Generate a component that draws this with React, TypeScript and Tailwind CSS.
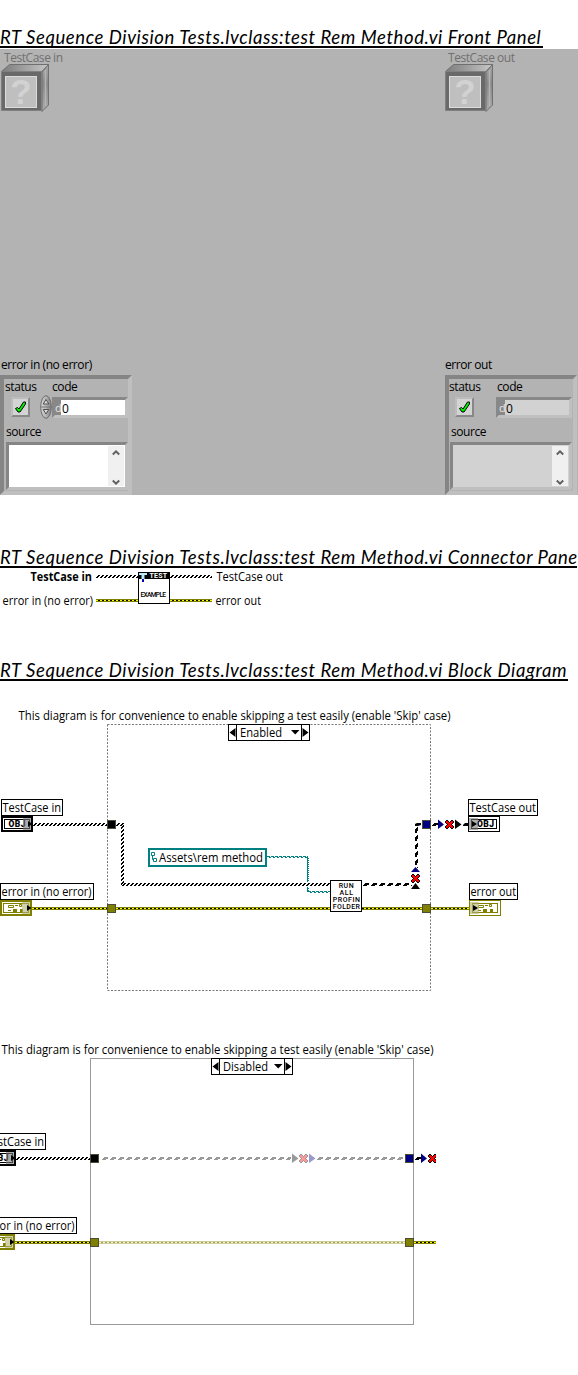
import type { ReactNode } from "react";

const UI = "'Open Sans', 'Noto Sans', sans-serif";

function Heading({ children, className }: { children: ReactNode; className: string }) {
  return (
    <h2
      className={
        "h-6 overflow-hidden whitespace-nowrap border-b-2 border-black font-[Lato,sans-serif] text-[18.5px] italic leading-[26px] tracking-[0.58px] text-black " +
        className
      }
    >
      {children}
    </h2>
  );
}

/* ---------- Front panel ---------- */

function ObjectCube() {
  return (
    <svg width="49" height="49" viewBox="0 0 49 49" className="block">
      <defs>
        <linearGradient id="cubeTop" x1="0" y1="0" x2="1" y2="0">
          <stop offset="0" stopColor="#7c7c7c" />
          <stop offset="1" stopColor="#c6c6c6" />
        </linearGradient>
        <linearGradient id="cubeSide" x1="0" y1="0" x2="0" y2="1">
          <stop offset="0" stopColor="#a8a8a8" />
          <stop offset="0.4" stopColor="#888" />
          <stop offset="1" stopColor="#aaa" />
        </linearGradient>
      </defs>
      <path d="M1.5 7.5L9.5 0.5H48.5L42 7.5Z" fill="url(#cubeTop)" stroke="#707070" />
      <path d="M42 8L48.5 0.5V41L42 47.5Z" fill="url(#cubeSide)" stroke="#707070" />
      <path d="M45.5 6V42" stroke="#b4b4b4" strokeWidth="1.5" />
      <rect x="1.5" y="7.5" width="40" height="39" fill="#696969" stroke="#808080" />
      <rect x="5.5" y="12.5" width="31" height="31" fill="#bfbfbf" stroke="#dcdcdc" />
      <text x="21" y="40" textAnchor="middle" fontFamily="Liberation Sans, sans-serif" fontWeight="700" fontSize="35" fill="#d2d2d2">
        ?
      </text>
    </svg>
  );
}

function ObjectControl({ label }: { label: string }) {
  return (
    <div className="w-[133px]">
      <div className="h-[15px] whitespace-nowrap pl-1 font-['Open_Sans',sans-serif] text-[12px] leading-[18px] tracking-[-0.45px] text-[#707070]">
        {label}
      </div>
      <ObjectCube />
    </div>
  );
}

function StatusLight() {
  return (
    <div className="h-5 w-[19px] border-2 border-b-[#888] border-l-[#bdbdbd] border-r-[#888] border-t-[#bdbdbd] bg-[#d4d4d4]">
      <svg width="15" height="16" viewBox="0 0 15 16" className="block">
        <path d="M2.5 9.5L4.5 8.5L6 10L10.5 3H12.5V5L7 13H5Z" fill="#00f000" stroke="#000" strokeLinejoin="round" />
      </svg>
    </div>
  );
}

function Spinner() {
  return (
    <svg width="12" height="24" viewBox="0 0 12 24" className="block">
      <defs>
        <linearGradient id="knob" x1="0" y1="0" x2="1" y2="0">
          <stop offset="0" stopColor="#d8d8d8" />
          <stop offset="0.5" stopColor="#b4b4b4" />
          <stop offset="1" stopColor="#808080" />
        </linearGradient>
      </defs>
      <ellipse cx="6" cy="12" rx="5.3" ry="11.3" fill="url(#knob)" stroke="#6e6e6e" />
      <path d="M1 12H11" stroke="#777" />
      <path d="M3.2 9L6 4.5L8.8 9Z" fill="#d8d8d8" stroke="#444" strokeWidth=".9" />
      <path d="M3.2 14.5L6 19L8.8 14.5Z" fill="#d8d8d8" stroke="#444" strokeWidth=".9" />
    </svg>
  );
}

function ErrorCluster({ title, input }: { title: string; input: boolean }) {
  const fieldBg = input ? "bg-white" : "bg-[#d2d2d2]";
  return (
    <div className="w-[133px] font-['Open_Sans',sans-serif] text-[12px] tracking-[-0.42px] text-black">
      <div className="h-[18px] whitespace-nowrap pl-px leading-[16px]">{title}</div>
      <div
        className={
          "h-[120px] border-4 border-b-[#bfbfbf] border-l-[#858585] border-r-[#bfbfbf] border-t-[#858585] bg-[#b3b3b3] " +
          (input ? "w-[132px]" : "ml-px w-[132px]")
        }
      >
        <div className={"flex h-[18px] leading-[16px] " + (input ? "pl-px" : "")}>
          <span className={input ? "w-[47px]" : "w-12"}>status</span>
          <span>code</span>
        </div>
        <div className={"flex h-[22px] items-start " + (input ? "pl-px" : "")}>
          <div className="ml-[6px] h-5 w-[19px]">
            <StatusLight />
          </div>
          <div className="-mt-0.5 ml-[10px] h-6 w-3">{input && <Spinner />}</div>
          <div
            className={
              "flex h-[21px] w-[76px] border-[3px] border-b-[#c0c0c0] border-l-[#888] border-r-[#c0c0c0] border-t-[#888] leading-[17px] " +
              fieldBg
            }
          >
            <span className="w-[6px] bg-[#888] text-[11px] leading-[16px] text-[#e4e4e4]">d</span>
            <span className="pl-px">0</span>
          </div>
        </div>
        <div className="h-[23px] pl-0.5 pt-[3px] leading-[20px]">source</div>
        <div
          className={
            "flex h-[48px] w-[122px] justify-end border-[3px] border-b-[#bfbfbf] border-l-[#858585] border-r-[#bfbfbf] border-t-[#858585] " +
            (input ? "ml-0.5 " : "ml-px ") +
            fieldBg
          }
        >
          <div className="my-px mr-px flex w-4 flex-col items-center justify-between bg-[#f0f0f0] pb-0 pt-[3px]">
            <svg width="8" height="7" viewBox="0 0 8 7">
              <path d="M0.8 5.5L4 2.3L7.2 5.5" stroke="#606060" strokeWidth="2" fill="none" />
            </svg>
            <svg width="8" height="7" viewBox="0 0 8 7">
              <path d="M0.8 1.5L4 4.7L7.2 1.5" stroke="#606060" strokeWidth="2" fill="none" />
            </svg>
          </div>
        </div>
      </div>
    </div>
  );
}

function FrontPanel() {
  return (
    <div className="mt-px flex h-[446px] flex-col justify-between overflow-hidden bg-[#b3b3b3]">
      <div className="flex justify-between">
        <ObjectControl label="TestCase in" />
        <div className="w-[134px]">
          <ObjectControl label="TestCase out" />
        </div>
      </div>
      <div className="flex justify-between">
        <ErrorCluster title="error in (no error)" input />
        <div className="w-[134px]">
          <ErrorCluster title="error out" input={false} />
        </div>
      </div>
    </div>
  );
}

/* ---------- Wires and terminals ---------- */

function Label({ x, y, w, children, bold }: { x: number; y: number; w: number; children: string; bold?: boolean }) {
  return (
    <text x={x} y={y} textLength={w} lengthAdjust="spacingAndGlyphs" fontFamily={UI} fontSize="12" fontWeight={bold ? 700 : 400} fill="#000">
      {children}
    </text>
  );
}

function Tiny({
  x,
  y,
  w,
  children,
  fill = "#000",
  size = 7,
  weight = 500,
}: {
  x: number;
  y: number;
  w: number;
  children: string;
  fill?: string;
  size?: number;
  weight?: number;
}) {
  return (
    <text x={x} y={y} textLength={w} lengthAdjust="spacing" fontFamily="Roboto, sans-serif" fontSize={size} fontWeight={weight} fill={fill}>
      {children}
    </text>
  );
}

function Patterns() {
  return (
    <svg width="0" height="0" className="absolute">
      <defs>
        <pattern id="objH" width="4" height="3" y="1" patternUnits="userSpaceOnUse">
          <path d="M2 0H4V1H2ZM1 1H3V2H1ZM0 2H2V3H0Z" fill="#000" />
        </pattern>
        <pattern id="objV" width="3" height="4" x="1" patternUnits="userSpaceOnUse">
          <path d="M0 2H1V4H0ZM1 1H2V3H1ZM2 0H3V2H2Z" fill="#000" />
        </pattern>
        <pattern id="dynH" width="8" height="3" y="1" patternUnits="userSpaceOnUse">
          <path d="M3 0H7V1H3ZM2 1H7V2H2ZM1 2H5V3H1Z" fill="#000" />
        </pattern>
        <pattern id="dynV" width="3" height="8" x="1" patternUnits="userSpaceOnUse">
          <path d="M0 3H1V7H0ZM1 2H2V7H1ZM2 1H3V5H2Z" fill="#000" />
        </pattern>
        <pattern id="err" width="4" height="3" y="1" patternUnits="userSpaceOnUse">
          <rect width="4" height="3" fill="#808000" />
          <rect y="1" width="2" height="1" fill="#ff0" />
          <rect x="2" y="1" width="2" height="1" fill="#000" />
        </pattern>
        <pattern id="pathH" width="4" height="2" patternUnits="userSpaceOnUse">
          <path d="M0 0H3V1H0ZM2 1H4V2H2Z" fill="#008080" />
        </pattern>
        <pattern id="pathV" width="2" height="2" x="1" patternUnits="userSpaceOnUse">
          <path d="M0 0H1V2H0ZM1 1H2V2H1Z" fill="#008080" />
        </pattern>
      </defs>
    </svg>
  );
}

type WireKind = "obj" | "dyn" | "err";

/* Horizontal wire, three pixels thick, drawn from x1 to x2 with its top edge at y. */
function WireH({ kind, x1, x2, y }: { kind: WireKind; x1: number; x2: number; y: number }) {
  const id = kind === "err" ? "err" : kind + "H";
  return (
    <g transform={`translate(${x1} ${y - 1})`}>
      <rect x="0" y="1" width={x2 - x1} height="3" fill={`url(#${id})`} />
    </g>
  );
}

function WireV({ kind, x, y1, y2 }: { kind: "obj" | "dyn"; x: number; y1: number; y2: number }) {
  return (
    <g transform={`translate(${x - 1} ${y1})`}>
      <rect x="1" y="0" width="3" height={y2 - y1} fill={`url(#${kind}V)`} />
    </g>
  );
}

function Tunnel({ x, y, fill }: { x: number; y: number; fill: string }) {
  return <rect x={x + 0.5} y={y + 0.5} width="8" height="8" fill={fill} stroke="#4c4c38" />;
}

/* Red cross on a broken wire, in a 9 by 9 box whose middle pixel is (x, y). */
function Broken({ x, y }: { x: number; y: number }) {
  return (
    <g transform={`translate(${x - 4} ${y - 4})`} shapeRendering="crispEdges">
      <path
        d="M1 0H3V1H4V2H5V1H6V0H8V1H9V3H8V4H7V5H8V6H9V8H8V9H6V8H5V7H4V8H3V9H1V8H0V6H1V5H2V4H1V3H0V1H1Z"
        fill="#000"
      />
      <path
        d="M1 1H3V2H4V3H5V2H6V1H8V3H7V4H6V5H7V6H8V8H6V7H5V6H4V7H3V8H1V6H2V5H3V4H2V3H1Z"
        fill="#f00"
      />
    </g>
  );
}

function BoxedLabel({ x, y, w, tx, tw, children }: { x: number; y: number; w: number; tx: number; tw: number; children: string }) {
  return (
    <g>
      <rect x={x + 0.5} y={y + 0.5} width={w - 1} height="16" fill="#fff" stroke="#000" />
      <Label x={tx} y={y + 13} w={tw}>
        {children}
      </Label>
    </g>
  );
}

function ClusterGlyph() {
  return (
    <g fill="none" stroke="#808000">
      <path d="M8.5 5.5H13.5V7.5H8.5ZM15 5.5H18M19.5 4.5H21.5V6.5H19.5ZM8 10.5H11" />
      <path d="M13 9H17V12H13ZM20 9H23V12H20Z" fill="#808000" stroke="none" />
    </g>
  );
}

function Terminal({ x, y, kind, output }: { x: number; y: number; kind: "obj" | "err"; output?: boolean }) {
  const c = kind === "obj" ? "#000" : "#808000";
  return (
    <g transform={`translate(${x} ${y})`}>
      {output ? (
        <rect x="0.5" y="0.5" width="31" height="15" fill="#fff" stroke={c} />
      ) : (
        <g>
          <rect x="0" y="0" width="32" height="16" fill={c} />
          <rect x="2" y="2" width="28" height="12" fill="#fff" />
        </g>
      )}
      <rect x="3.5" y="3.5" width="25" height="9" fill="#fff" stroke={c} />
      {kind === "obj" ? (
        <Tiny x={output ? 9 : 7.5} y={11} w={17} size={8.5} weight={900}>
          OBJ
        </Tiny>
      ) : output ? (
        <g transform="translate(1 0)">
          <ClusterGlyph />
        </g>
      ) : (
        <ClusterGlyph />
      )}
      {output ? (
        <g>
          <rect x="1" y="2" width="9" height="12" fill={kind === "obj" ? "#777" : "#b0b070"} opacity="0.6" />
          <path d="M4 5L9 8L4 11Z" fill="#000" />
        </g>
      ) : (
        <g>
          <rect x="22" y="2" width="8" height="12" fill={kind === "obj" ? "#777" : "#b0b070"} opacity="0.6" />
          <path d="M27 5L31.5 8L27 11Z" fill="#000" />
        </g>
      )}
    </g>
  );
}

function CaseSelector({ name, w }: { name: string; w: number }) {
  return (
    <g>
      <rect x="228.5" y="724.5" width="81" height="16" fill="#fff" stroke="#000" />
      <path d="M236.5 724V741M301.5 724V741" stroke="#000" />
      <path d="M235.5 728V737L229.5 732.5ZM302.5 728V737L308.5 732.5ZM291 730H299.5L295.2 734.5Z" fill="#000" />
      <Label x={240} y={737} w={w}>
        {name}
      </Label>
    </g>
  );
}

/* Parts shared by the enabled and the disabled case. */
function DiagramShell({ dotted, children }: { dotted: boolean; children: ReactNode }) {
  return (
    <g>
      <Label x={18.5} y={720} w={432}>
        This diagram is for convenience to enable skipping a test easily (enable 'Skip' case)
      </Label>
      <rect x="107.5" y="724.5" width="323" height="266" fill="none" stroke={dotted ? "#777" : "#999"} strokeDasharray={dotted ? "2 1.5" : undefined} />
      <CaseSelector name={dotted ? "Enabled" : "Disabled"} w={dotted ? 42 : 45} />
      <BoxedLabel x={1} y={799} w={62} tx={2.5} tw={58.5}>
        TestCase in
      </BoxedLabel>
      <Terminal x={1} y={816} kind="obj" />
      <BoxedLabel x={0} y={883} w={94} tx={1.5} tw={90}>
        error in (no error)
      </BoxedLabel>
      <Terminal x={0} y={900} kind="err" />
      <WireH kind="obj" x1={33} x2={107} y={823} />
      <WireH kind="err" x1={32} x2={107} y={907} />
      {children}
      <WireH kind="dyn" x1={431} x2={438} y={823} />
      <path d="M438 819.5L444 824.5L438 829Z" fill="#000080" />
      <Broken x={449} y={824} />
      <WireH kind="err" x1={431} x2={469} y={907} />
      <Tunnel x={107} y={820} fill="#000" />
      <Tunnel x={107} y={904} fill="#808000" />
      <Tunnel x={422} y={820} fill="#000080" />
      <Tunnel x={422} y={904} fill="#808000" />
    </g>
  );
}

function EnabledDiagram() {
  return (
    <svg width="578" height="319" viewBox="0 681 578 319" className="block">
      <DiagramShell dotted>
        <WireH kind="obj" x1={116} x2={124} y={823} />
        <WireV kind="obj" x={121} y1={825} y2={886} />
        <g transform="translate(267 856)">
          <rect width="41" height="2" fill="url(#pathH)" />
        </g>
        <g transform="translate(306 857)">
          <rect x="1" width="2" height="35" fill="url(#pathV)" />
        </g>
        <g transform="translate(308 891)">
          <rect width="22" height="2" fill="url(#pathH)" />
        </g>
        <rect x="304" y="882" width="8" height="5" fill="#fff" />
        <WireH kind="obj" x1={122} x2={330} y={883} />
        <WireH kind="err" x1={116} x2={422} y={907} />
        <rect x="149" y="849" width="117" height="17" fill="#fff" stroke="#008080" strokeWidth="2" />
        <path d="M151.5 852.5H154.5V855.5H151.5ZM152.5 856V859.5H153.5M153.5 858.5H156.5V861.5H153.5Z" fill="none" stroke="#008080" />
        <Label x={159} y={862} w={104}>
          Assets\rem method
        </Label>
        <rect x="330.5" y="880.5" width="31" height="31" fill="#fff" stroke="#000" />
        <Tiny x={338.7} y={888} w={15}>RUN</Tiny>
        <Tiny x={339.5} y={895} w={13.5}>ALL</Tiny>
        <Tiny x={332.7} y={902} w={27.3}>PROFIN</Tiny>
        <Tiny x={332.7} y={909} w={27.3}>FOLDER</Tiny>
        <WireH kind="dyn" x1={362} x2={412} y={883} />
        <WireV kind="dyn" x={415} y1={826} y2={868} />
        <path d="M415 826V824L417 823H421V825L418 826Z" fill="#000" />
        <path d="M411 889L415.5 883L420 889Z" fill="#000" />
        <path d="M411 872L415.5 867L420 872Z" fill="#000080" />
        <Broken x={415} y={878} />
      </DiagramShell>
      <path d="M455 819.5L461.5 824.5L455 829Z" fill="#000" />
      <path d="M463 826V825L465 823H468V826Z" fill="#000" />
      <BoxedLabel x={468} y={799} w={70} tx={469.5} tw={66.5}>
        TestCase out
      </BoxedLabel>
      <Terminal x={468} y={816} kind="obj" output />
      <BoxedLabel x={469} y={883} w={49} tx={470.5} tw={45.5}>
        error out
      </BoxedLabel>
      <Terminal x={469} y={900} kind="err" output />
    </svg>
  );
}

function DisabledDiagram() {
  return (
    <svg width="436" height="375" viewBox="17 666 436 375" className="block">
      <DiagramShell dotted={false}>
        <g opacity="0.4">
          <WireH kind="dyn" x1={118} x2={308} y={823} />
          <WireH kind="dyn" x1={333} x2={420} y={823} />
          <path d="M309 819.5L315.5 824.5L309 829Z" fill="#000" />
          <Broken x={320} y={824} />
          <path d="M326 819.5L332.5 824.5L326 829Z" fill="#000080" />
          <WireH kind="err" x1={116} x2={422} y={907} />
        </g>
      </DiagramShell>
    </svg>
  );
}

function ConnectorPane() {
  return (
    <svg width="578" height="89" viewBox="0 568 578 89" className="block">
      <WireH kind="obj" x1={96} x2={138} y={575} />
      <WireH kind="obj" x1={170} x2={212} y={575} />
      <WireH kind="err" x1={96} x2={138} y={599} />
      <WireH kind="err" x1={170} x2={212} y={599} />
      <rect x="138.5" y="572.5" width="31" height="31" fill="#fff" stroke="#000" />
      <rect x="138" y="572" width="32" height="7" fill="#000" />
      <path d="M139 573H147V575H144.5V579H141.5V575H139Z" fill="#b8ecff" />
      <rect x="142" y="579" width="2" height="3" fill="#0000c0" />
      <Tiny x={149.5} y={578} w={17.5} fill="#fff" size={7} weight={700}>TEST</Tiny>
      <Tiny x={140.5} y={597} w={25.5} size={6.6}>EXAMPLE</Tiny>
      <Label x={30.5} y={581} w={61.5} bold>TestCase in</Label>
      <Label x={2.5} y={605} w={90.5}>error in (no error)</Label>
      <Label x={216.5} y={581} w={66.5}>TestCase out</Label>
      <Label x={215.5} y={605} w={45.5}>error out</Label>
    </svg>
  );
}

export default function App() {
  return (
    <main className="relative flex h-[1375px] w-[578px] flex-col overflow-hidden bg-white pt-6">
      <Patterns />
      <Heading className="w-[543px]">RT Sequence Division Tests.lvclass:test Rem Method.vi Front Panel</Heading>
      <FrontPanel />
      <Heading className="mt-[49px] w-[577px]">RT Sequence Division Tests.lvclass:test Rem Method.vi Connector Pane</Heading>
      <ConnectorPane />
      <Heading className="w-[568px]">RT Sequence Division Tests.lvclass:test Rem Method.vi Block Diagram</Heading>
      <EnabledDiagram />
      <DisabledDiagram />
    </main>
  );
}
